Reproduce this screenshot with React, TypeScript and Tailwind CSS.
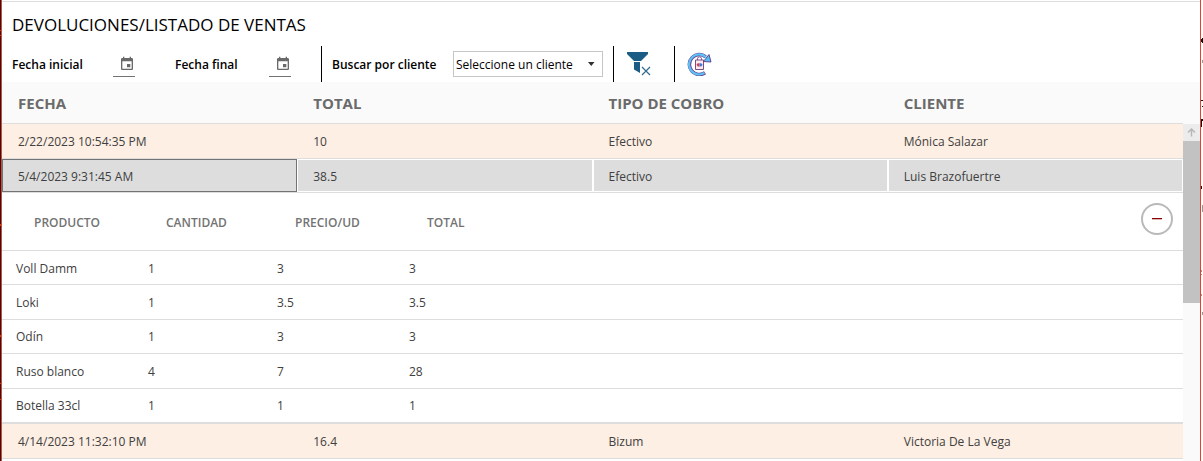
import React, { useState } from "react";

const sales = [
  { fecha: "2/22/2023 10:54:35 PM", total: "10", tipo: "Efectivo", cliente: "Mónica Salazar" },
  { fecha: "5/4/2023 9:31:45 AM", total: "38.5", tipo: "Efectivo", cliente: "Luis Brazofuertre" },
  { fecha: "4/14/2023 11:32:10 PM", total: "16.4", tipo: "Bizum", cliente: "Victoria De La Vega" },
];

const items = [
  ["Voll Damm", "1", "3", "3"],
  ["Loki", "1", "3.5", "3.5"],
  ["Odín", "1", "3", "3"],
  ["Ruso blanco", "4", "7", "28"],
  ["Botella 33cl", "1", "1", "1"],
];

function CalendarIcon() {
  return (
    <svg width="16" height="16" viewBox="0 0 24 24" fill="#696969" aria-hidden="true">
      <path d="M17 12h-5v5h5v-5zM16 1v2H8V1H6v2H5c-1.110 0-1.990.9-1.990 2L3 19c0 1.100.890 2 2 2h14c1.100 0 2-.9 2-2V5c0-1.100-.9-2-2-2h-1V1h-2zm3 18H5V8h14v11z" />
    </svg>
  );
}

function FilterClearIcon() {
  return (
    <svg width="26" height="26" viewBox="0 0 26 26" aria-hidden="true">
      <path d="M1 1h21v2l-7 7H8L1 3z" fill="#1b5c84" />
      <path d="M8 11h6v11l-6-3.500z" fill="#1b5c84" />
      <path d="M16 16l8 8M24 16l-8 8" stroke="#2f6c91" strokeWidth="1.200" fill="none" />
    </svg>
  );
}

function ReturnIcon() {
  return (
    <svg width="25" height="24" viewBox="0 0 25 24" aria-hidden="true">
      <path d="M18 20.800A10 10 0 1 1 18.700 4.800" fill="none" stroke="#6a4a96" strokeWidth="3.600" />
      <path d="M17.400 20.900A10 10 0 1 1 19 5.300" fill="none" stroke="#5cc2f7" strokeWidth="2.200" />
      <path d="M22 2.500l2 7.500-8-.5 2.500-2.500z" fill="#55bdf5" stroke="#5b3a86" strokeWidth="0.900" />
      <path d="M10.500 8V6.800a2 2 0 0 1 4 0V8" fill="none" stroke="#6b4a8f" strokeWidth="0.900" />
      <path d="M8.500 8h8v9.500h-8z" fill="#fde9ea" stroke="#6b3a76" strokeWidth="0.900" />
      <path d="M9.500 12.800l1.300-1.600h1.700v3.200h-1.700z" fill="#e8324a" />
      <path d="M12.500 11.200h1.700l1.500 1.600-1.500 1.600h-1.700z" fill="#2f7fe0" />
    </svg>
  );
}

function DateField({ id, label }: { id: string; label: string }) {
  return (
    <div className="flex items-center justify-between">
      <span id={id} className="text-xs font-semibold">{label}</span>
      <button
        type="button"
        aria-labelledby={id}
        className="flex h-6 w-[22px] justify-end border-b border-[#737373] pt-[3px]"
      >
        <CalendarIcon />
      </button>
    </div>
  );
}

function SaleRow({ sale, selected, onSelect }: { sale: (typeof sales)[number]; selected: boolean; onSelect: () => void }) {
  const values = [sale.fecha, sale.total, sale.tipo, sale.cliente];
  return (
    <tr onClick={onSelect} className={selected ? "bg-white" : "bg-[#fdefe4]"}>
      {values.map((value, i) => (
        <td key={i} className={selected ? "border-b border-[#dddddd] p-0" : "h-[35px] border-b border-[#dddddd] p-0"}>
          <div
            className={
              !selected
                ? "px-4 pt-[2px]"
                : i === 0
                  ? "flex h-[33px] items-center border border-[#737373] bg-[#dddddd] px-[15px] pt-[2px]"
                  : "flex h-[33px] items-center border border-white bg-[#dddddd] px-[15px] pt-[2px]"
            }
          >
            {value}
          </div>
        </td>
      ))}
    </tr>
  );
}

function SaleDetails() {
  return (
    <div className="relative">
      <table className="h-[230px] w-full table-fixed border-separate border-spacing-0">
        <colgroup>
          <col className="w-[132px]" />
          <col className="w-[129px]" />
          <col className="w-[132px]" />
          <col />
        </colgroup>
        <thead>
          <tr className="text-left text-[#737373]">
            {["PRODUCTO", "CANTIDAD", "PRECIO/UD", "TOTAL"].map((h) => (
              <th key={h} className="h-[58px] border-b border-[#dddddd] p-0 pt-[2px] pl-8 font-semibold">{h}</th>
            ))}
          </tr>
        </thead>
        <tbody>
          {items.map((row) => (
            <tr key={row[0]}>
              {row.map((cell, i) => (
                <td key={i} className="border-b border-[#dddddd] p-0 pt-[2px] pl-[14px]">{cell}</td>
              ))}
            </tr>
          ))}
        </tbody>
      </table>
      <button
        type="button"
        aria-label="Contraer"
        className="absolute top-[10px] right-[10px] flex size-8 items-center justify-center rounded-full border-2 border-[#b9b9b9]"
      >
        <svg width="10" height="4" viewBox="0 0 10 4" aria-hidden="true">
          <path d="M0 1h10v1.300H0z" fill="#8b0000" />
        </svg>
      </button>
    </div>
  );
}

export default function App() {
  const [selected, setSelected] = useState(1);
  return (
    <div className="flex min-h-screen bg-white font-['Open_Sans','Noto_Sans',sans-serif] text-xs text-[#404040]">
      <svg width="1" height="461" className="shrink-0 self-stretch bg-[#1c1c1c]" aria-hidden="true">
        <path d="M0 30h1v1H0zM0 35h1v1H0zM0 224h1v2H0zM0 335h1v2H0zM0 383h1v1H0zM0 399h1v1H0z" fill="#b04a1c" />
      </svg>
      <div className="flex flex-1 flex-col border-x border-[#e8402f] bg-white">
        <header className="mt-px border-t border-[#dddddd] pl-[10px] text-black">
          <h1 className="pt-[6px] text-[17px] leading-[34px]">DEVOLUCIONES/LISTADO DE VENTAS</h1>
          <div className="mt-1 flex h-9">
            <div className="grid w-[310px] grid-cols-[123px_116px] gap-x-10 border-r border-black pt-px">
              <DateField id="inicio" label="Fecha inicial" />
              <DateField id="fin" label="Fecha final" />
            </div>
            <div className="flex w-[292px] items-center justify-between border-r border-black pr-[10px] pl-[10px]">
              <label htmlFor="cliente" className="pt-px font-semibold">Buscar por cliente</label>
              <div className="relative">
                <select
                  id="cliente"
                  className="h-[26px] w-[150px] appearance-none border border-[#c6c6c6] bg-white pt-px pl-[2px]"
                >
                  <option>Seleccione un cliente</option>
                </select>
                <svg width="8" height="4" viewBox="0 0 8 4" className="pointer-events-none absolute top-[11px] right-2" aria-hidden="true">
                  <path d="M1 0h6.500l-3.250 4z" fill="#303030" />
                </svg>
              </div>
            </div>
            <button type="button" aria-label="Quitar filtro" className="flex w-[61px] items-center border-r border-black pl-3">
              <FilterClearIcon />
            </button>
            <button type="button" aria-label="Devolución" className="flex items-center px-3">
              <ReturnIcon />
            </button>
          </div>
        </header>
        <div className="grid flex-1 grid-cols-[1fr_17px] grid-rows-[42px_1fr] bg-[#fafafa]">
          <main className="row-span-2 bg-white">
            <table className="w-full table-fixed border-separate border-spacing-0">
              <thead>
                <tr className="bg-[#fafafa] text-left text-[15px] text-[#6b6b6b]">
                  {["FECHA", "TOTAL", "TIPO DE COBRO", "CLIENTE"].map((h) => (
                    <th key={h} className="h-[42px] border-b border-[#dddddd] p-0 pt-px pl-4 font-bold">{h}</th>
                  ))}
                </tr>
              </thead>
              <tbody>
                {sales.map((sale, i) => (
                  <React.Fragment key={sale.fecha}>
                    <SaleRow sale={sale} selected={selected === i} onSelect={() => setSelected(i)} />
                    {i === 1 && (
                      <tr>
                        <td colSpan={4} className="border-b border-[#dddddd] p-0">
                          <SaleDetails />
                        </td>
                      </tr>
                    )}
                  </React.Fragment>
                ))}
              </tbody>
            </table>
          </main>
          <div className="col-start-2 row-start-2" aria-hidden="true">
            <div className="flex h-[17px] items-center justify-center bg-[#ececec]">
              <svg width="9" height="9" viewBox="0 0 9 9">
                <path d="M4.500 8.500V1.500M1 4.500l3.500-3.500L8 4.500" fill="none" stroke="#b8b8b8" strokeWidth="1.500" />
              </svg>
            </div>
            <div className="h-[162px] bg-[#c2c2c2]" />
          </div>
        </div>
      </div>
      <svg width="2" height="461" className="shrink-0" aria-hidden="true">
        <path d="M0 39h1v3H0zM1 38h1v5H1zM0 100h2v1H0zM1 106h1v1H1zM0 119h2v2H0zM0 121h1v6H0zM0 186h1v3H0z" fill="#111111" />
        <path d="M1 60h1v3H1zM1 205h1v7H1zM0 270h1v2H0zM0 274h1v1H0zM0 294h1v2H0zM1 312h1v3H1z" fill="#999999" />
      </svg>
    </div>
  );
}
